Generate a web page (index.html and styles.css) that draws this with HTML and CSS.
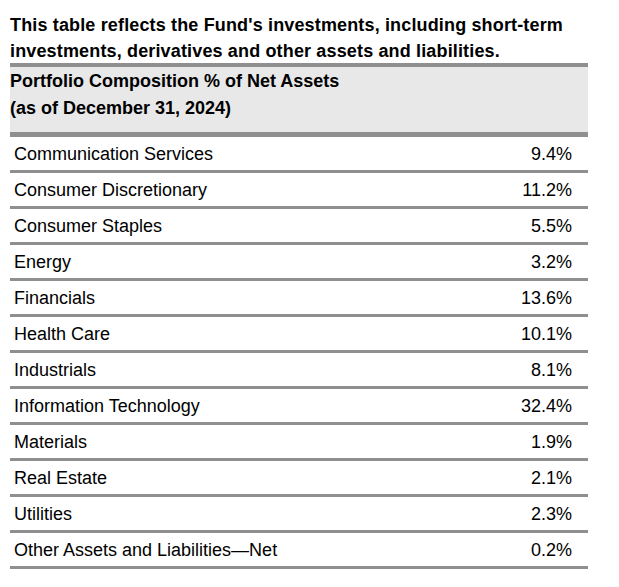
FILE: index.html
```html
<!DOCTYPE html>
<html>
<head>
<meta charset="utf-8">
<link rel="stylesheet" href="styles.css">
</head>
<body>
<div class="wrap">
  <p class="intro">This table reflects the Fund's investments, including short-term investments, derivatives and other assets and liabilities.</p>
  <table class="comp">
    <thead>
      <tr><th colspan="2">Portfolio Composition % of Net Assets<br>(as of December 31, 2024)</th></tr>
    </thead>
    <tbody>
      <tr><td class="name">Communication Services</td><td class="val">9.4%</td></tr>
      <tr><td class="name">Consumer Discretionary</td><td class="val">11.2%</td></tr>
      <tr><td class="name">Consumer Staples</td><td class="val">5.5%</td></tr>
      <tr><td class="name">Energy</td><td class="val">3.2%</td></tr>
      <tr><td class="name">Financials</td><td class="val">13.6%</td></tr>
      <tr><td class="name">Health Care</td><td class="val">10.1%</td></tr>
      <tr><td class="name">Industrials</td><td class="val">8.1%</td></tr>
      <tr><td class="name">Information Technology</td><td class="val">32.4%</td></tr>
      <tr><td class="name">Materials</td><td class="val">1.9%</td></tr>
      <tr><td class="name">Real Estate</td><td class="val">2.1%</td></tr>
      <tr><td class="name">Utilities</td><td class="val">2.3%</td></tr>
      <tr><td class="name">Other Assets and Liabilities—Net</td><td class="val">0.2%</td></tr>
    </tbody>
  </table>
</div>
</body>
</html>
```
FILE: styles.css
```css
html, body {
  margin: 0;
  padding: 0;
  background: #ffffff;
}
body {
  font-family: "Liberation Sans", Arial, sans-serif;
  color: #000000;
}
.wrap {
  width: 578px;
  padding: 12px 0 0 10px;
}
.intro {
  margin: 0;
  font-size: 18px;
  font-weight: bold;
  line-height: 26px;
  height: 51px;
  letter-spacing: 0.15px;
}
.comp {
  width: 578px;
  border-collapse: collapse;
  font-size: 18px;
}
.comp th {
  text-align: left;
  font-weight: bold;
  line-height: 27px;
  background: #e8e8e8;
  border-top: 4px solid #8f8f8f;
  border-bottom: 5px solid #8f8f8f;
  padding: 1px 0 10px 0;
}
.comp td {
  height: 32px;
  padding: 1px 0 0 0;
  line-height: 32px;
  border-bottom: 3px solid #8f8f8f;
}
.comp td.name {
  padding-left: 4px;
}
.comp td.val {
  text-align: right;
  padding-right: 16px;
}
```
